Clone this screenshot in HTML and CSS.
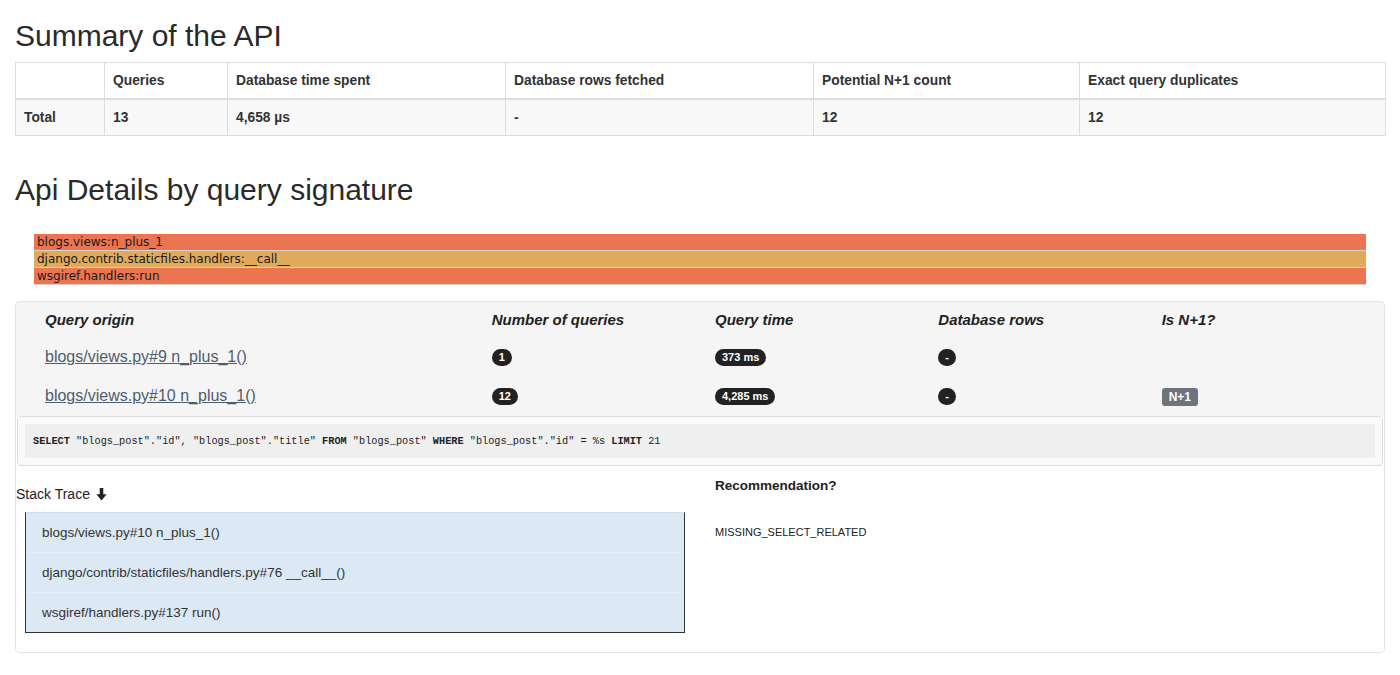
FILE: index.html
```html
<!DOCTYPE html>
<html>
<head>
<meta charset="utf-8">
<title>API summary</title>
<link rel="stylesheet" href="styles.css">
</head>
<body>
<div class="page">
  <h2 class="title">Summary of the API</h2>
  <table class="summary">
    <thead>
      <tr>
        <th class="w0"></th>
        <th class="w1">Queries</th>
        <th class="w2">Database time spent</th>
        <th class="w3">Database rows fetched</th>
        <th class="w4">Potential N+1 count</th>
        <th class="w5">Exact query duplicates</th>
      </tr>
    </thead>
    <tbody>
      <tr>
        <td>Total</td>
        <td>13</td>
        <td>4,658 µs</td>
        <td>-</td>
        <td>12</td>
        <td>12</td>
      </tr>
    </tbody>
  </table>

  <h2 class="title details">Api Details by query signature</h2>

  <div class="flame">
    <div class="bar orange">blogs.views:n_plus_1</div>
    <div class="bar yellow">django.contrib.staticfiles.handlers:__call__</div>
    <div class="bar orange">wsgiref.handlers:run</div>
  </div>

  <div class="card">
    <div class="card-head">
      <div class="qrow qhead">
        <div class="cell">Query origin</div>
        <div class="cell">Number of queries</div>
        <div class="cell">Query time</div>
        <div class="cell">Database rows</div>
        <div class="cell">Is N+1?</div>
      </div>
      <div class="qrow qdata">
        <div class="cell"><a class="origin" href="#">blogs/views.py#9 n_plus_1()</a></div>
        <div class="cell"><span class="badge">1</span></div>
        <div class="cell"><span class="badge">373 ms</span></div>
        <div class="cell"><span class="badge">-</span></div>
        <div class="cell"></div>
      </div>
      <div class="qrow qdata">
        <div class="cell"><a class="origin" href="#">blogs/views.py#10 n_plus_1()</a></div>
        <div class="cell"><span class="badge">12</span></div>
        <div class="cell"><span class="badge">4,285 ms</span></div>
        <div class="cell"><span class="badge">-</span></div>
        <div class="cell"><span class="label">N+1</span></div>
      </div>
    </div>

    <div class="sql-box">
      <pre class="sql"><b>SELECT</b> "blogs_post"."id", "blogs_post"."title" <b>FROM</b> "blogs_post" <b>WHERE</b> "blogs_post"."id" = %s <b>LIMIT</b> 21</pre>
    </div>

    <div class="bottom">
      <div class="trace-col">
        <div class="trace-label">Stack Trace <svg class="arrow" width="11" height="13" viewBox="0 0 11 13"><path d="M3.7 0 H7.3 V6.2 H10.6 L5.5 12.6 L0.4 6.2 H3.7 Z" fill="#222"/></svg></div>
        <ul class="trace">
          <li>blogs/views.py#10 n_plus_1()</li>
          <li>django/contrib/staticfiles/handlers.py#76 __call__()</li>
          <li>wsgiref/handlers.py#137 run()</li>
        </ul>
      </div>
      <div class="rec-col">
        <div class="rec-title">Recommendation?</div>
        <div class="rec-value">MISSING_SELECT_RELATED</div>
      </div>
    </div>
  </div>
</div>
</body>
</html>
```

FILE: styles.css
```css
* {
  box-sizing: border-box;
}

body {
  margin: 0;
  background: #fff;
  color: #333;
  font-family: "Liberation Sans", Helvetica, Arial, sans-serif;
  font-size: 13px;
  line-height: 1.42857;
}

.page {
  padding: 0 15px;
}

.title {
  font-size: 30px;
  font-weight: 400;
  line-height: 33px;
  color: #2a2a2a;
  margin: 19px 0 10px;
}

.title.details {
  margin: 37px 0 0;
}

/* summary table */
.summary {
  width: 100%;
  border-collapse: collapse;
  border: 1px solid #ddd;
  table-layout: fixed;
  font-size: 13.8px;
}

.summary th,
.summary td {
  border: 1px solid #ddd;
  padding: 8px 8px;
  line-height: 19px;
  text-align: left;
  font-weight: bold;
  color: #333;
}

.summary thead th {
  border-bottom: 2px solid #ddd;
  background: #fff;
}

.summary tbody tr {
  background: #f9f9f9;
}

.w0 { width: 89px; }
.w1 { width: 123px; }
.w2 { width: 278px; }
.w3 { width: 308px; }
.w4 { width: 266px; }
.w5 { width: 306px; }

/* flame graph */
.flame {
  margin: 28px 19px 0;
  padding-bottom: 1px;
  background: #dcd3cf;
}

.bar {
  height: 16px;
  padding-left: 3px;
  font-family: "DejaVu Sans", Verdana, sans-serif;
  font-size: 12px;
  line-height: 16px;
  color: #1a1a1a;
  white-space: nowrap;
  overflow: hidden;
}

.bar + .bar {
  margin-top: 1px;
}

.bar.orange {
  background: #eb7550;
}

.bar.yellow {
  background: #e0aa5a;
}

/* details card */
.card {
  margin-top: 16px;
  border: 1px solid #e3e3e3;
  border-radius: 4px;
  overflow: hidden;
  background: #fff;
}

.card-head {
  background: #f5f5f5;
}

.qrow {
  display: grid;
  grid-template-columns: 4fr 2fr 2fr 2fr 2fr;
  padding: 0 14px;
  align-items: center;
}

.cell {
  padding: 0 15px;
}

.qhead {
  height: 36px;
  font-size: 15px;
  font-weight: bold;
  font-style: italic;
  color: #222;
}

.qdata {
  height: 39px;
}

.origin {
  font-size: 16px;
  color: #4e5d6c;
  text-decoration: underline;
}

.badge {
  display: inline-block;
  min-width: 10px;
  padding: 3px 7px;
  font-size: 11px;
  font-weight: bold;
  line-height: 11px;
  color: #fff;
  text-align: center;
  white-space: nowrap;
  vertical-align: middle;
  background: #222;
  border-radius: 10px;
}

.label {
  display: inline-block;
  padding: 3px 7px 3px;
  font-size: 12px;
  font-weight: bold;
  line-height: 12px;
  color: #fff;
  background: #6c757d;
  border-radius: 3px;
  vertical-align: middle;
}

.sql-box {
  margin: 0 1px;
  padding: 7px;
  border: 1px solid #e4dad5;
  border-radius: 4px;
  background: #fafafa;
}

.sql {
  margin: 0;
  padding: 8px;
  background: #efefef;
  font-family: "Liberation Mono", "Courier New", monospace;
  font-size: 10.25px;
  line-height: 18px;
  color: #222;
  white-space: pre;
}

.sql b {
  font-weight: bold;
}

.bottom {
  display: flex;
  padding-bottom: 19px;
}

.trace-col {
  width: 684px;
  flex: none;
}

.trace-label {
  margin-top: 19px;
  font-size: 14px;
  line-height: 18px;
  color: #222;
  display: flex;
  align-items: center;
  gap: 6px;
}

.arrow {
  display: block;
}

.trace {
  list-style: none;
  margin: 9px 0 0 9px;
  padding: 0;
  width: 660px;
  background: #dce9f5;
  border: 1px solid #333;
  border-top-color: #d3dde8;
}

.trace li {
  height: 39px;
  line-height: 39px;
  padding: 0 16px;
  font-size: 13.5px;
  color: #333;
}

.trace li + li {
  height: 40px;
  border-top: 1px dotted #eef3f8;
}

.rec-col {
  flex: 1;
  padding-left: 15px;
}

.rec-title {
  margin-top: 11px;
  font-size: 13.5px;
  font-weight: bold;
  line-height: 18px;
  color: #222;
}

.rec-value {
  margin-top: 29px;
  font-size: 11px;
  line-height: 16px;
  color: #222;
}
```
